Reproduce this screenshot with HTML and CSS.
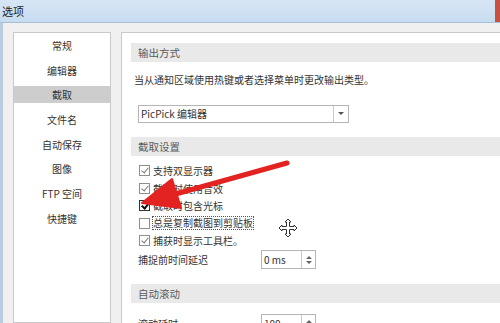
FILE: index.html
```html
<!doctype html>
<html lang="zh">
    <head>
        <meta charset="UTF-8" />
        <meta name="viewport" content="width=device-width, initial-scale=1.0" />
        <title>选项</title>
        <link rel="stylesheet" href="styles.css">
    </head>
    <body>
        <div class="window">
            <div class="titlebar">
                <span class="title">选项</span>
                <span class="close"></span>
            </div>
            <div class="frame">
                <div class="nav">
                    <div class="nav-item">常规</div>
                    <div class="nav-item">编辑器</div>
                    <div class="nav-item active">截取</div>
                    <div class="nav-item">文件名</div>
                    <div class="nav-item">自动保存</div>
                    <div class="nav-item">图像</div>
                    <div class="nav-item">FTP 空间</div>
                    <div class="nav-item">快捷键</div>
                </div>
                <div class="content">
                    <div class="section-head">输出方式</div>
                    <p class="desc">当从通知区域使用热键或者选择菜单时更改输出类型。</p>
                    <div class="select">
                        <span class="select-text">PicPick 编辑器</span>
                        <span class="select-btn">
                            <svg width="6" height="4" viewBox="0 0 6 4"><path d="M0 0h6L3 3z" fill="#555"/></svg>
                        </span>
                    </div>

                    <div class="section-head second">截取设置</div>
                    <div class="checks">
                        <label class="check"><span class="box on"></span>支持双显示器</label>
                        <label class="check"><span class="box on"></span>截取时使用音效</label>
                        <label class="check"><span class="box on dark"></span>截取时包含光标</label>
                        <label class="check"><span class="box"></span><span class="focus">总是复制截图到剪贴板</span></label>
                        <label class="check"><span class="box on"></span>捕获时显示工具栏。</label>
                    </div>
                    <div class="field">
                        <span class="field-label">捕捉前时间延迟</span>
                        <div class="spin">
                            <span class="spin-text">0 ms</span>
                            <span class="spin-btn">
                                <svg width="6" height="10" viewBox="0 0 6 10"><path d="M0 4L3 1L6 4zM0 6L3 9L6 6z" fill="#666"/></svg>
                            </span>
                        </div>
                    </div>

                    <div class="section-head third">自动滚动</div>
                    <div class="field last">
                        <span class="field-label">滚动延时</span>
                        <div class="spin">
                            <span class="spin-text">100</span>
                            <span class="spin-btn">
                                <svg width="6" height="10" viewBox="0 0 6 10"><path d="M0 4L3 1L6 4zM0 6L3 9L6 6z" fill="#666"/></svg>
                            </span>
                        </div>
                    </div>
                </div>
            </div>

            <!-- annotation drawn over the screenshot -->
            <svg class="arrow" width="500" height="323" viewBox="0 0 500 323">
                <line x1="287" y1="163" x2="172" y2="195" stroke="#e32222" stroke-width="5" stroke-linecap="round"/>
                <path d="M142 203L172 179L181 208z" fill="#e32222" stroke="#e32222" stroke-width="2" stroke-linejoin="round"/>
            </svg>
            <svg class="cursor" width="20" height="20" viewBox="0 0 20 20">
                <path d="M10 1L13 4H11.5V8.5H16V7L19 10L16 13V11.5H11.5V16H13L10 19L7 16H8.5V11.5H4V13L1 10L4 7V8.5H8.5V4H7z" fill="#fff" stroke="#333" stroke-width="1"/>
            </svg>
        </div>
    </body>
</html>
```

FILE: styles.css
```css
html,
body {
    margin: 0;
    height: 100%;
    overflow: hidden;
    font-family: "Noto Sans CJK SC", "Noto Sans", sans-serif;
    font-size: 10px;
    color: #333;
}
.window {
    position: relative;
    width: 500px;
    height: 323px;
    background: #f0f0f0;
    display: flex;
    flex-direction: column;
}
.titlebar {
    height: 22px;
    display: flex;
    align-items: center;
    justify-content: space-between;
    background: linear-gradient(to bottom, #d7e6f5, #c7dcf1);
    border-bottom: 1px solid #a9bfd6;
}
.title {
    padding-left: 2px;
    font-size: 11px;
    color: #222;
}
.close {
    width: 5px;
    height: 22px;
    background: #c9503e;
}
.frame {
    flex: 1;
    display: flex;
    gap: 10px;
    padding: 9px 0 0 10px;
    border-left: 3px solid #b9cbe0;
    min-height: 0;
}
.nav {
    width: 96px;
    background: #fff;
    border: 1px solid #c9c9c9;
    padding-top: 4px;
}
.nav-item {
    height: 17px;
    line-height: 17px;
    margin-bottom: 7.7px;
    text-align: center;
    color: #333;
}
.nav-item.active {
    background: #cdcdcd;
}
.content {
    flex: 1;
    background: #fff;
    border-left: 1px solid #c9c9c9;
    border-top: 1px solid #c9c9c9;
    padding: 10px 0 0 9px;
    overflow: hidden;
}
.section-head {
    height: 19px;
    line-height: 19px;
    padding-left: 7px;
    background: #e9e9e9;
    font-size: 10.5px;
    color: #5a5a5a;
}
.section-head.second {
    margin-top: 14px;
}
.section-head.third {
    margin-top: 14px;
}
.desc {
    margin: 10px 0 0 3px;
    line-height: 16px;
}
.select {
    margin: 17px 0 0 7px;
    width: 209px;
    height: 16px;
    border: 1px solid #b5b5b5;
    display: flex;
    justify-content: space-between;
}
.select-text {
    padding-left: 2px;
    line-height: 16px;
}
.select-btn {
    width: 14px;
    border-left: 1px solid #c9c9c9;
    display: flex;
    align-items: center;
    justify-content: center;
}
.checks {
    margin: 6px 0 0 8px;
    display: flex;
    flex-direction: column;
}
.check {
    height: 17.5px;
    display: flex;
    align-items: center;
}
.box {
    width: 9px;
    height: 9px;
    border: 1px solid #8f8f8f;
    margin-right: 3px;
    position: relative;
    background: #fff;
}
.box.on::after {
    content: "";
    position: absolute;
    left: 3px;
    top: 0;
    width: 3px;
    height: 6px;
    border: solid #777;
    border-width: 0 1px 1px 0;
    transform: rotate(40deg);
}
.box.dark {
    border-color: #333;
}
.box.dark::after {
    border-color: #111;
    border-width: 0 2px 2px 0;
}
.focus {
    outline: 1px dotted #555;
    line-height: 12px;
}
.field {
    margin: 0 0 0 7px;
    display: flex;
    align-items: center;
    height: 20px;
}
.field.last {
    margin-top: 11px;
}
.field-label {
    width: 123px;
}
.spin {
    width: 53px;
    height: 17px;
    border: 1px solid #b5b5b5;
    display: flex;
    justify-content: space-between;
}
.spin-text {
    padding-left: 2px;
    line-height: 17px;
}
.spin-btn {
    width: 13px;
    border-left: 1px solid #c9c9c9;
    display: flex;
    align-items: center;
    justify-content: center;
}
.arrow {
    position: absolute;
    left: 0;
    top: 0;
    pointer-events: none;
}
.cursor {
    position: absolute;
    left: 278px;
    top: 218px;
}
```
